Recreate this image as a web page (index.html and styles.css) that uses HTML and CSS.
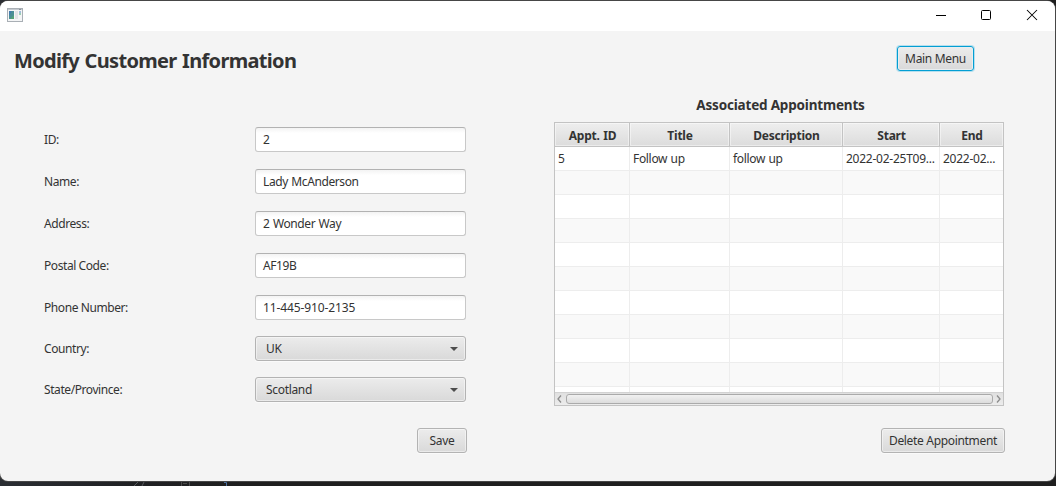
FILE: index.html
```html
<!DOCTYPE html>
<html lang="en">
<head>
<meta charset="utf-8">
<title>Modify Customer Information</title>
<link rel="stylesheet" href="styles.css">
</head>
<body>
<div class="window">
  <header class="titlebar">
    <svg class="app-icon" width="16" height="14" viewBox="0 0 16 14">
      <rect x=".5" y=".5" width="15" height="13" fill="#f4f5f6" stroke="#a9afb5"/>
      <path d="M1 1.5H15" stroke="#c5cad0"/>
      <path d="M12 1.5H14" stroke="#8b939c"/>
      <rect x="2" y="3" width="5" height="8" fill="#4b8f95"/>
      <path d="M2 3H5L2 8Z" fill="#447cae"/>
      <path d="M7 7V11H3Z" fill="#55a276"/>
      <rect x="8" y="3" width="3" height="8" fill="#e1e3e6"/>
      <rect x="12" y="3" width="2" height="4" fill="#9ccfb4"/>
      <rect x="12" y="3" width="2" height="2" fill="#9fbddb"/>
    </svg>
    <div class="controls">
      <svg width="12" height="12" viewBox="0 0 12 12"><path d="M1 6.5H11" stroke="#000"/></svg>
      <svg width="12" height="12" viewBox="0 0 12 12"><rect x="1.5" y="1.5" width="9" height="9" rx="1" fill="none" stroke="#000"/></svg>
      <svg width="12" height="12" viewBox="0 0 12 12"><path d="M1 1L11 11M11 1L1 11" stroke="#000" stroke-width="1.05"/></svg>
    </div>
  </header>
  <div class="heading">
    <h1>Modify Customer Information</h1>
    <button class="btn btn-focus">Main Menu</button>
  </div>
  <main class="content">
    <form class="form">
      <div class="row"><label>ID:</label><div class="field">2</div></div>
      <div class="row"><label>Name:</label><div class="field">Lady McAnderson</div></div>
      <div class="row"><label>Address:</label><div class="field">2 Wonder Way</div></div>
      <div class="row"><label>Postal Code:</label><div class="field">AF19B</div></div>
      <div class="row"><label>Phone Number:</label><div class="field phone">11-445-910-2135</div></div>
      <div class="row row-combo"><label>Country:</label><div class="combo">UK<svg width="8" height="4" viewBox="0 0 8 4"><path d="M0 0H8L4 4Z" fill="#4d4d4d"/></svg></div></div>
      <div class="row row-combo"><label>State/Province:</label><div class="combo">Scotland<svg width="8" height="4" viewBox="0 0 8 4"><path d="M0 0H8L4 4Z" fill="#4d4d4d"/></svg></div></div>
      <button class="btn btn-save" type="button">Save</button>
    </form>
    <section class="appointments">
      <h2>Associated Appointments</h2>
      <div class="table">
        <div class="tr head"><span>Appt. ID</span><span>Title</span><span>Description</span><span>Start</span><span>End</span></div>
        <div class="rows">
          <div class="tr"><span>5</span><span>Follow up</span><span>follow up</span><span class="date">2022-02-25T09...</span><span class="date">2022-02...</span></div>
          <div class="tr"><span></span><span></span><span></span><span></span><span></span></div>
          <div class="tr"><span></span><span></span><span></span><span></span><span></span></div>
          <div class="tr"><span></span><span></span><span></span><span></span><span></span></div>
          <div class="tr"><span></span><span></span><span></span><span></span><span></span></div>
          <div class="tr"><span></span><span></span><span></span><span></span><span></span></div>
          <div class="tr"><span></span><span></span><span></span><span></span><span></span></div>
          <div class="tr"><span></span><span></span><span></span><span></span><span></span></div>
          <div class="tr"><span></span><span></span><span></span><span></span><span></span></div>
          <div class="tr"><span></span><span></span><span></span><span></span><span></span></div>
          <div class="tr"><span></span><span></span><span></span><span></span><span></span></div>
        </div>
        <div class="scrollbar">
          <svg width="5" height="8" viewBox="0 0 5 8"><path d="M4 .5L1 4L4 7.5" fill="none" stroke="#8c8c8c" stroke-width="1.3"/></svg>
          <div class="thumb"></div>
          <svg width="5" height="8" viewBox="0 0 5 8"><path d="M1 .5L4 4L1 7.5" fill="none" stroke="#8c8c8c" stroke-width="1.3"/></svg>
        </div>
      </div>
      <button class="btn btn-delete">Delete Appointment</button>
    </section>
  </main>
</div>
<svg class="backdrop" width="300" height="4" viewBox="0 0 300 4">
  <path d="M134 4L138 0M142 4L144 0" stroke="#55585c" fill="none"/>
  <path d="M181.500 0V4M183 1.500H187M189.500 0V4" stroke="#4a4a4a" fill="none"/>
  <path d="M224 .5H226.500V4" stroke="#4b6f9e" fill="none"/>
</svg>
</body>
</html>
```
FILE: styles.css
```css
* { box-sizing: border-box; }

body {
  margin: 0;
  height: 486px;
  padding: 1px 1px 0 0;
  overflow: hidden;
  background: linear-gradient(90deg, #2b2e33, #202124 130px, #1f1f1f 250px);
  color: #333;
  font: 12px/16px "Noto Sans", "Open Sans", sans-serif;
  letter-spacing: -0.32px;
}

.window {
  height: 480px;
  border-radius: 8px;
  overflow: hidden;
  background: #f4f4f4;
  box-shadow: 0 0 0 1px #464646;
}

.backdrop { display: block; margin-top: 1px; }

.titlebar {
  height: 30px;
  padding: 0 17px 0 7px;
  display: flex;
  align-items: center;
  justify-content: space-between;
  background: #fff;
}

.app-icon { margin-bottom: 2px; }

.controls { display: flex; gap: 34px; margin-bottom: 2px; }
.controls svg:nth-child(1) { margin-right: -1px; }

.heading {
  height: 60px;
  padding: 15px 81px 0 14px;
  display: flex;
  justify-content: space-between;
  align-items: flex-start;
}

h1 {
  margin: 0;
  font-size: 20px;
  line-height: 30px;
  letter-spacing: -0.68px;
  word-spacing: 1px;
}

.btn {
  height: 25px;
  padding: 1px 0 0;
  border: 1px solid #b3b3b3;
  border-radius: 3px;
  background: linear-gradient(#ececec, #d9d9d9);
  box-shadow: inset 0 0 0 1px rgba(255, 255, 255, .45), 0 1px 0 #fafafa;
  color: #333;
  font: inherit;
  letter-spacing: inherit;
  white-space: nowrap;
}

.btn-focus {
  width: 77px;
  border-color: #039ed3;
  box-shadow: inset 0 0 0 1px #e9eef0, 0 0 0 1px #b5dfee;
}

.content {
  display: flex;
  align-items: flex-start;
  padding-left: 44px;
}

.form {
  width: 423px;
  margin-right: 87px;
  padding-top: 36px;
  display: flex;
  flex-direction: column;
}

.row {
  height: 42px;
  display: flex;
  align-items: flex-start;
}

.row-combo { height: 41px; margin-top: -1px; margin-bottom: 1px; }
.row-combo + .row-combo { margin-top: -1px; }

label { width: 211px; line-height: 25px; letter-spacing: -0.42px; }

.field, .combo {
  width: 211px;
  height: 25px;
  padding: 0 7px;
  border: 1px solid #c8c8c8;
  border-top-color: #b2b2b2;
  border-radius: 3px;
  line-height: 24px;
  background: linear-gradient(#f3f3f3, #fff 5px);
}

.field { letter-spacing: -0.4px; word-spacing: 0.7px; }
.field.phone { letter-spacing: -0.12px; }

.combo {
  padding: 0 7px 0 10px;
  display: flex;
  align-items: center;
  justify-content: space-between;
  border-color: #b3b3b3;
  background: linear-gradient(#ececec, #d9d9d9);
  box-shadow: inset 0 0 0 1px rgba(255, 255, 255, .45), 0 1px 0 #fafafa;
}

.btn-save {
  align-self: flex-end;
  width: 50px;
  margin-top: 9px;
}

.appointments {
  width: 451px;
  display: flex;
  flex-direction: column;
}

h2 {
  margin: 0 0 6px;
  padding-top: 3px;
  width: 453px;
  font-size: 13.5px;
  line-height: 22px;
  text-align: center;
  letter-spacing: -0.18px;
}

.table {
  width: 450px;
  height: 284px;
  border: 1px solid #c3c3c3;
  display: flex;
  flex-direction: column;
  background: #fff;
}

.tr {
  height: 24px;
  display: grid;
  grid-template-columns: 75px 100px 113px 97px 63px;
}

.tr span {
  padding-left: 3px;
  border-right: 1px solid #ededed;
  border-bottom: 1px solid #ededed;
  line-height: 23px;
  white-space: nowrap;
  overflow: hidden;
  word-spacing: 0.6px;
}

.tr span:last-child { border-right: 0; }
.tr .date { letter-spacing: -0.25px; }

.rows { flex: 1; overflow: hidden; }
.rows .tr:nth-child(even) { background: #f9f9f9; }

.head.tr span {
  padding: 1px 0 0 1px;
  border-color: #c3c3c3;
  background: linear-gradient(#eee, #dcdcdc);
  box-shadow: inset 0 0 0 1px rgba(255, 255, 255, .45);
  font-weight: bold;
  text-align: center;
  letter-spacing: -0.22px;
}

.scrollbar {
  height: 13px;
  display: flex;
  align-items: center;
  justify-content: space-between;
  padding: 0 2px;
  border-top: 1px solid #d2d2d2;
  background: linear-gradient(#e0e0e0, #ececec);
}

.thumb {
  width: 427px;
  height: 10px;
  border: 1px solid #aaa;
  border-radius: 3px;
  background: linear-gradient(#f1f1f1, #dcdcdc);
}

.btn-delete {
  width: 124px;
  align-self: flex-end;
  margin-top: 22px;
}
```
